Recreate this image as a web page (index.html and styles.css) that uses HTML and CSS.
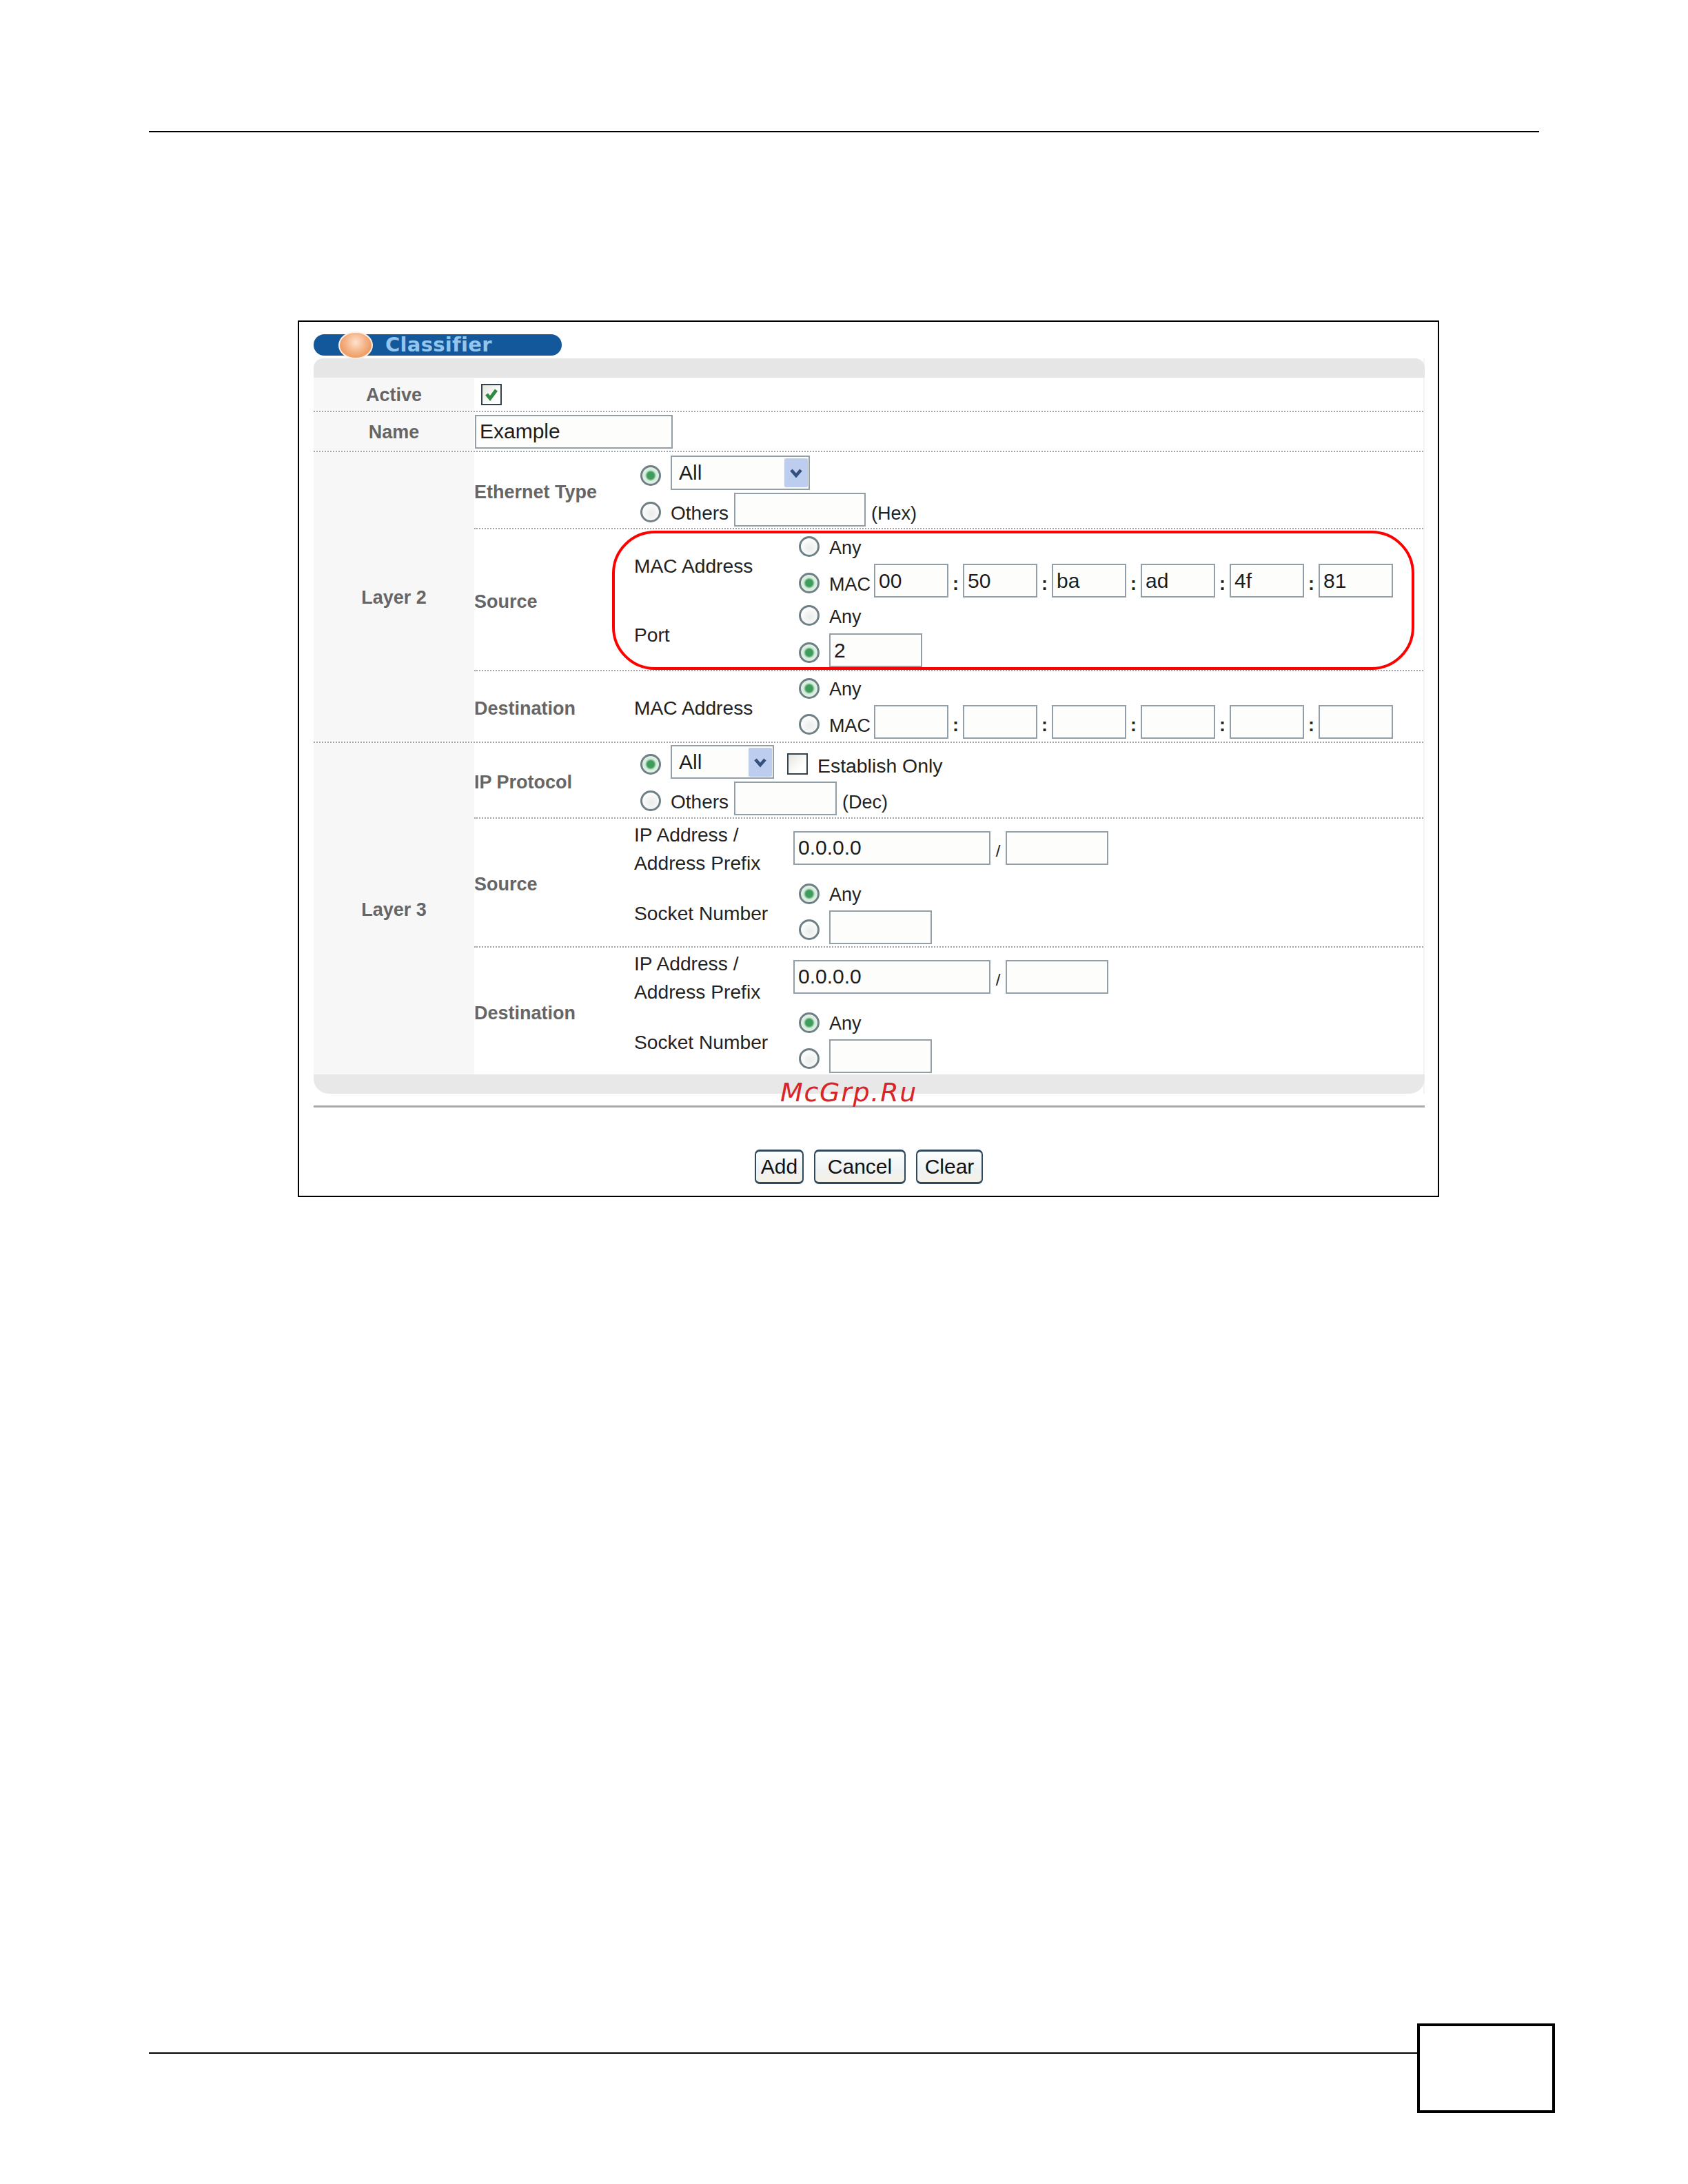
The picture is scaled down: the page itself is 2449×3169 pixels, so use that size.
FILE: index.html
```html
<!DOCTYPE html>
<html lang="en">
<head>
<meta charset="utf-8">
<title>Classifier</title>
<link rel="stylesheet" href="styles.css">
</head>
<body>
<div class="page">
  <div class="top-rule"></div>
  <section class="card">
    <div class="title-pill"><span class="orb"></span><span class="title-text">Classifier</span></div>
    <div class="panel">
      <div class="panel-head"></div>

      <div class="plain-row row-active">
        <div class="side">Active</div>
        <div class="plain-cell"><span class="check"><svg viewBox="0 0 24 24" width="24" height="24"><path d="M5 12l5 6 9-12" fill="none" stroke="#2f8a45" stroke-width="5"/></svg></span></div>
      </div>
      <div class="plain-row row-name">
        <div class="side">Name</div>
        <div class="plain-cell name-cell"><span class="field w-name">Example</span></div>
      </div>

      <div class="group">
        <div class="side">Layer 2</div>
        <div class="group-body">
          <div class="row row-eth">
            <div class="row-label">Ethernet Type</div>
            <div class="stack stack-eth">
              <div class="line"><span class="radio on low"></span><span class="select w-sel-l">All<span class="arrow"><svg viewBox="0 0 24 24" width="24" height="24"><path d="M5 8l7 8 7-8" fill="none" stroke="#34507e" stroke-width="4.5"/></svg></span></span></div>
              <div class="line"><span class="radio low"></span><span class="txt w-others low-txt">Others</span><span class="field w-hex"></span><span class="txt unit low-txt">(Hex)</span></div>
            </div>
          </div>
          <div class="row row-src2">
            <div class="row-label">Source</div>
            <div class="sub">
              <div class="sub-label label-down">MAC Address</div>
              <div>
                <div class="line tall"><span class="radio"></span><span class="txt">Any</span></div>
                <div class="line"><span class="radio on low"></span><span class="txt w-mac low-txt">MAC</span><span class="field w-oct">00</span><span class="colon">:</span><span class="field w-oct">50</span><span class="colon">:</span><span class="field w-oct">ba</span><span class="colon">:</span><span class="field w-oct">ad</span><span class="colon">:</span><span class="field w-oct">4f</span><span class="colon">:</span><span class="field w-oct">81</span></div>
              </div>
              <div class="sub-label label-down">Port</div>
              <div>
                <div class="line tall-b"><span class="radio"></span><span class="txt">Any</span></div>
                <div class="line"><span class="radio on low"></span><span class="field w-port">2</span></div>
              </div>
            </div>
          </div>
          <div class="row row-dst2">
            <div class="row-label">Destination</div>
            <div class="sub">
              <div class="sub-label label-down">MAC Address</div>
              <div>
                <div class="line tall-d"><span class="radio on"></span><span class="txt">Any</span></div>
                <div class="line"><span class="radio low"></span><span class="txt w-mac low-txt">MAC</span><span class="field w-oct"></span><span class="colon">:</span><span class="field w-oct"></span><span class="colon">:</span><span class="field w-oct"></span><span class="colon">:</span><span class="field w-oct"></span><span class="colon">:</span><span class="field w-oct"></span><span class="colon">:</span><span class="field w-oct"></span></div>
              </div>
            </div>
          </div>
        </div>
      </div>

      <div class="group group-l3">
        <div class="side">Layer 3</div>
        <div class="group-body">
          <div class="row row-ip">
            <div class="row-label">IP Protocol</div>
            <div class="stack stack-ip">
              <div class="line"><span class="radio on low"></span><span class="select w-sel-s">All<span class="arrow"><svg viewBox="0 0 24 24" width="24" height="24"><path d="M5 8l7 8 7-8" fill="none" stroke="#34507e" stroke-width="4.5"/></svg></span></span><span class="check check-est"></span><span class="txt est">Establish Only</span></div>
              <div class="line"><span class="radio low"></span><span class="txt w-others low-txt">Others</span><span class="field w-dec"></span><span class="txt unit low-txt">(Dec)</span></div>
            </div>
          </div>
          <div class="row row-src3">
            <div class="row-label">Source</div>
            <div class="sub sub-ip">
              <div class="sub-label two">IP Address /<br>Address Prefix</div>
              <div class="line ip-line"><span class="field w-ip">0.0.0.0</span><span class="slash">/</span><span class="field w-pre"></span></div>
              <div class="sub-label label-socket">Socket Number</div>
              <div class="socket-opts">
                <div class="line any-line"><span class="radio on"></span><span class="txt">Any</span></div>
                <div class="line"><span class="radio low"></span><span class="field w-port w-sock"></span></div>
              </div>
            </div>
          </div>
          <div class="row row-dst3">
            <div class="row-label">Destination</div>
            <div class="sub sub-ip">
              <div class="sub-label two">IP Address /<br>Address Prefix</div>
              <div class="line ip-line"><span class="field w-ip">0.0.0.0</span><span class="slash">/</span><span class="field w-pre"></span></div>
              <div class="sub-label label-socket">Socket Number</div>
              <div class="socket-opts">
                <div class="line any-line"><span class="radio on"></span><span class="txt">Any</span></div>
                <div class="line"><span class="radio low"></span><span class="field w-port w-sock"></span></div>
              </div>
            </div>
          </div>
        </div>
      </div>

      <div class="panel-foot"></div>
    </div>
    <div class="card-rule"></div>
    <div class="buttons">
      <span class="btn w-add">Add</span>
      <span class="btn w-cancel">Cancel</span>
      <span class="btn w-clear">Clear</span>
    </div>
    <div class="highlight"></div>
    <div class="watermark">McGrp.Ru</div>
  </section>
  <footer class="foot">
    <div class="foot-rule"></div>
    <div class="foot-box"></div>
  </footer>
</div>
</body>
</html>
```
FILE: styles.css
```css
* { box-sizing: border-box; }
html, body { margin: 0; padding: 0; background: #fff; }
body { font-family: "Liberation Sans", Arial, sans-serif; font-size: 27px; color: #222; }

.page { width: 2449px; height: 3169px; padding: 190px 193px 0 216px; overflow: hidden; }
.top-rule { height: 2px; background: #000; margin-right: 23px; }

.card { position: relative; width: 1656px; height: 1272px; margin: 273px 0 0 216px; border: 2px solid #000; padding: 18px 19px 0 21px; }

.title-pill { display: flex; align-items: center; width: 360px; height: 31px; background: #14589c; border-radius: 16px; }
.orb { flex: none; width: 50px; height: 40px; margin-left: 36px; border-radius: 50%; border: 2px solid #fbeee4; background: radial-gradient(circle at 50% 38%, #fde3cd 0, #f4b386 45%, #e8833e 100%); }
.title-text { margin-left: 18px; font-family: "DejaVu Sans", sans-serif; font-weight: 700; font-size: 29px; line-height: 31px; letter-spacing: 0.3px; color: #93c6ee; }

.panel { margin-top: 4px; border-right: 2px solid #f3f4f5; }
.panel-head { height: 28px; background: #e6e6e6; border-radius: 14px 14px 0 0; margin-right: -2px; }
.panel-foot { height: 28px; background: #e8e8e8; border-radius: 0 0 22px 22px; margin-right: -2px; }

.side { display: flex; align-items: center; justify-content: center; flex: none; width: 233px; padding-top: 3px; background: #f7f7f7; font-weight: 700; color: #666; }

.plain-row { display: flex; border-bottom: 2px dotted #a3a3a3; }
.row-active { height: 50px; }
.row-name { height: 58px; }
.plain-cell { display: flex; align-items: center; padding-left: 10px; }
.name-cell { padding-left: 1px; }

.group { display: flex; height: 422px; border-bottom: 2px dotted #a3a3a3; }
.group-l3 { height: 481px; border-bottom: 0; }
.group-body { flex: 1; min-width: 0; }

.row { display: grid; grid-template-columns: 232px 1fr; border-bottom: 2px dotted #a3a3a3; }
.row-label { align-self: center; padding-top: 6px; font-weight: 700; color: #666; }
.row-eth { height: 112px; }
.row-src2 { height: 206px; }
.row-dst2 { height: 102px; border-bottom: 0; }
.row-ip { height: 110px; }
.row-src3 { height: 187px; }
.row-dst3 { height: 184px; border-bottom: 0; }

.stack { display: flex; flex-direction: column; gap: 4px; padding-left: 9px; }
.stack-eth { padding-top: 5px; }
.stack-ip { padding-top: 3px; }

.sub { display: grid; grid-template-columns: 239px 1fr; align-items: center; align-content: start; }
.sub-ip { grid-template-columns: 231px 1fr; grid-template-rows: 84px 98px; }
.sub-label { font-size: 28.2px; color: #222; }
.label-down { padding-top: 8px; }
.label-socket { padding-top: 8px; }
.two { padding-top: 4px; line-height: 41px; }

.line { display: flex; align-items: center; min-height: 49px; }
.tall { height: 50px; }
.tall-b { height: 52px; }
.tall-d { height: 48px; }
.any-line { height: 49px; }
.socket-opts { padding-left: 8px; }

.txt { padding-top: 4px; white-space: nowrap; }
.low-txt { padding-top: 11px; }
.unit { margin-left: 8px; }
.w-others { width: 92px; font-size: 28px; }
.w-mac { width: 65px; }
.est { margin-left: 14px; padding-top: 12px; font-size: 28.4px; }

.radio { flex: none; width: 30px; height: 30px; margin-right: 14px; border-radius: 50%; border: 3px solid #6f7f86; background: radial-gradient(circle at 55% 60%, #e9ecea 0, #fff 80%); }
.radio.on { background: radial-gradient(circle, #3f9c5c 0, #3f9c5c 5px, #d5ecdb 8px, #f4faf6 100%); }
.radio.low { margin-top: 7px; }

.field, .select { display: flex; align-items: center; flex: none; height: 49px; padding-left: 5px; border: 2px solid #939fa7; background: #fdfdfb; font-size: 30px; line-height: 1; color: #1c1c1c; }
.w-name { width: 287px; }
.w-hex { width: 191px; }
.w-dec { width: 149px; }
.w-oct { width: 108px; }
.w-port { width: 135px; }
.w-sock { width: 149px; }
.w-ip { width: 286px; }
.w-pre { width: 149px; }

.select { padding-left: 10px; }
.w-sel-l { width: 202px; height: 50px; }
.w-sel-s { width: 150px; }
.arrow { display: flex; align-items: center; justify-content: center; width: 34px; height: 42px; margin-left: auto; margin-right: 1px; border-radius: 2px; background: #bdcdf0; }

.colon { flex: none; width: 21px; padding-top: 10px; text-align: center; font-weight: 700; color: #222; }
.slash { flex: none; width: 22px; padding-top: 9px; text-align: center; font-size: 24px; color: #222; }

.check { display: flex; align-items: center; justify-content: center; flex: none; width: 30px; height: 31px; border: 2px solid #33424c; background: linear-gradient(135deg, #e6e6df, #fff 70%); }
.check-est { margin-left: 19px; margin-top: 6px; }

.card-rule { height: 3px; margin-top: 17px; background: #aaa; }

.buttons { display: flex; gap: 15px; margin: 61px 0 0 640px; }
.btn { display: flex; align-items: center; justify-content: center; height: 50px; border: 2px solid #2f4a5e; border-top-width: 3px; border-bottom-width: 3px; border-radius: 7px; background: linear-gradient(#fdfefe, #eef2f2 60%, #f6f1e6); font-size: 30px; color: #111; }
.w-add { width: 71px; }
.w-cancel { width: 133px; }
.w-clear { width: 97px; }

.highlight { position: absolute; left: 454px; top: 303px; width: 1164px; height: 202px; border: 4px solid #f00; border-radius: 62px; }

.watermark { position: absolute; left: 698px; top: 1096px; font-family: "DejaVu Sans", sans-serif; font-style: oblique; font-size: 38px; line-height: 44px; letter-spacing: 1.7px; color: #d9242a; }

.foot { display: flex; align-items: flex-start; margin-top: 1199px; }
.foot-rule { flex: 1; height: 2px; margin-top: 42px; background: #000; }
.foot-box { flex: none; width: 200px; height: 130px; border: 4px solid #000; }
```
